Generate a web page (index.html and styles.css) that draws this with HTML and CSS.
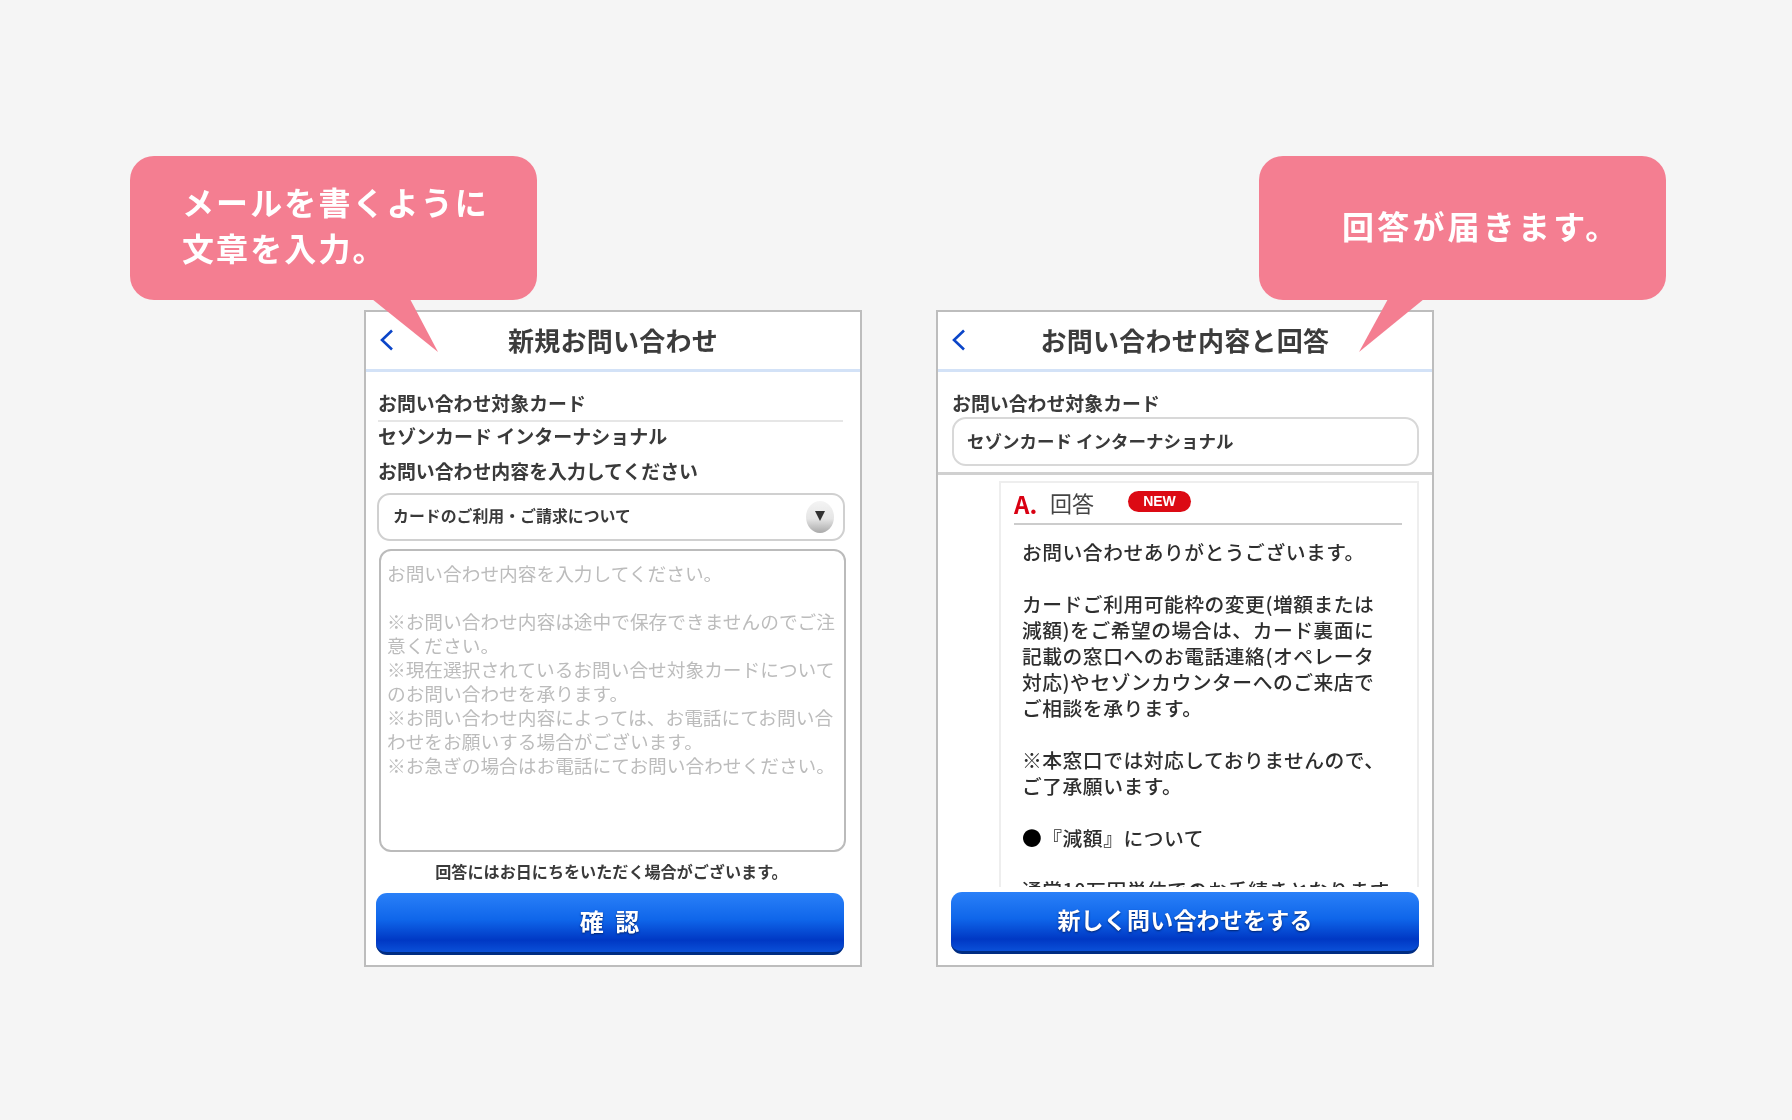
FILE: index.html
```html
<!DOCTYPE html>
<html lang="ja">
<head>
    <meta charset="UTF-8">
    <meta name="viewport" content="width=device-width, initial-scale=1.0">
    <title>お問い合わせ</title>
    <link rel="stylesheet" href="styles.css">
</head>
<body>
    <div class="stage">

        <!-- 新規お問い合わせ -->
        <div class="step">
            <section class="phone">
                <header class="phone-head">
                    <svg class="back" width="15" height="22" viewBox="0 0 15 22"><path d="M13 1.5 3 11l10 9.5" fill="none" stroke="#0b45c8" stroke-width="2.6"/></svg>
                    <h1 class="phone-title">新規お問い合わせ</h1>
                </header>
                <div class="form-body">
                    <p class="label">お問い合わせ対象カード</p>
                    <p class="card-name">セゾンカード インターナショナル</p>
                    <p class="label label-second">お問い合わせ内容を入力してください</p>
                    <div class="select">
                        <span>カードのご利用・ご請求について</span>
                        <span class="knob"><span class="knob-arrow"></span></span>
                    </div>
                    <div class="textarea">
                        お問い合わせ内容を入力してください。<br>
                        <br>
                        ※お問い合わせ内容は途中で保存できませんのでご注<br>
                        意ください。<br>
                        ※現在選択されているお問い合せ対象カードについて<br>
                        のお問い合わせを承ります。<br>
                        ※お問い合わせ内容によっては、お電話にてお問い合<br>
                        わせをお願いする場合がございます。<br>
                        ※お急ぎの場合はお電話にてお問い合わせください。
                    </div>
                    <p class="note">回答にはお日にちをいただく場合がございます。</p>
                    <div class="btn btn-confirm">確 認</div>
                </div>
            </section>
            <div class="bubble bubble-left">
                <p>メールを書くように<br>文章を入力。</p>
            </div>
            <svg class="tail tail-left" width="70" height="54" viewBox="0 0 70 54"><polygon points="0,0 38,0 66,53" fill="#f47e91"/></svg>
        </div>

        <!-- お問い合わせ内容と回答 -->
        <div class="step">
            <section class="phone">
                <header class="phone-head">
                    <svg class="back" width="15" height="22" viewBox="0 0 15 22"><path d="M13 1.5 3 11l10 9.5" fill="none" stroke="#0b45c8" stroke-width="2.6"/></svg>
                    <h1 class="phone-title">お問い合わせ内容と回答</h1>
                </header>
                <div class="target">
                    <p class="label">お問い合わせ対象カード</p>
                    <div class="field">セゾンカード インターナショナル</div>
                </div>
                <div class="answer-area">
                    <div class="answer">
                        <div class="answer-head">
                            <span class="answer-mark">A.</span>
                            <span class="answer-title">回答</span>
                            <span class="badge">NEW</span>
                        </div>
                        <p class="answer-text">
                            お問い合わせありがとうございます。<br>
                            <br>
                            カードご利用可能枠の変更(増額または<br>
                            減額)をご希望の場合は、カード裏面に<br>
                            記載の窓口へのお電話連絡(オペレータ<br>
                            対応)やセゾンカウンターへのご来店で<br>
                            ご相談を承ります。<br>
                            <br>
                            ※本窓口では対応しておりませんので、<br>
                            ご了承願います。<br>
                            <br>
                            <span class="dot">●</span>『減額』について<br>
                            <br>
                            通常10万円単位でのお手続きとなります
                        </p>
                    </div>
                </div>
                <div class="btn btn-new">新しく問い合わせをする</div>
            </section>
            <div class="bubble bubble-right">
                <p>回答が届きます。</p>
            </div>
            <svg class="tail tail-right" width="70" height="54" viewBox="0 0 70 54"><polygon points="30,0 66,0 1,53" fill="#f47e91"/></svg>
        </div>

    </div>
</body>
</html>
```

FILE: styles.css
```css
/* Genel */
body {
    margin: 0;
    background-color: #f5f5f5;
    font-family: "Noto Sans CJK JP", "Noto Sans", sans-serif;
    color: #2e2e2e;
}

p, h1 {
    margin: 0;
}

.stage {
    display: flex;
    gap: 74px;
    height: 810px;
    padding: 310px 0 0 364px;
}

.step {
    position: relative;
    width: 498px;
    height: 657px;
}

/* Telefon */
.phone {
    box-sizing: border-box;
    width: 498px;
    height: 657px;
    background-color: #fff;
    border: 2px solid #bdbdbd;
    overflow: hidden;
    filter: blur(0.6px);
}

.phone-head {
    position: relative;
    display: flex;
    align-items: center;
    justify-content: center;
    box-sizing: border-box;
    height: 60px;
    border-bottom: 3px solid #d3e2f7;
}

.back {
    position: absolute;
    left: 13px;
    top: 17px;
}

.phone-title {
    font-size: 26px;
    font-weight: 700;
    line-height: 1;
    letter-spacing: 0.25px;
    margin-top: -2px;
    color: #3c3c3c;
}

/* Form */
.form-body {
    padding: 19px 0 0 12px;
}

.label {
    padding-bottom: 1px;
    font-size: 18.9px;
    line-height: 23px;
    font-weight: 700;
    color: #3a3a3a;
}

.card-name {
    width: 465px;
    margin-top: 5px;
    padding: 2px 0 1px;
    border-top: 2px solid #e6e6e6;
    font-size: 19px;
    line-height: 24px;
    font-weight: 700;
    color: #3a3a3a;
}

.label-second {
    margin-top: 10px;
}

.select {
    display: flex;
    align-items: center;
    justify-content: space-between;
    box-sizing: border-box;
    width: 468px;
    height: 48px;
    margin: 10px 0 0 -1px;
    padding: 0 9px 3px 14px;
    border: 2px solid #d0d0d0;
    border-radius: 13px;
    font-size: 15.9px;
    font-weight: 700;
    color: #3a3a3a;
}

.knob {
    display: flex;
    align-items: center;
    justify-content: center;
    width: 28px;
    height: 32px;
    margin-top: 3px;
    border-radius: 50%;
    background: linear-gradient(#f4f4f4 0%, #e6e6e6 55%, #a9a9a9 100%);
}

.knob-arrow {
    width: 0;
    height: 0;
    margin-top: -3px;
    border-left: 5px solid transparent;
    border-right: 5px solid transparent;
    border-top: 10px solid #333;
}

.textarea {
    box-sizing: border-box;
    width: 467px;
    height: 303px;
    padding: 10px 0 0 6px;
    margin: 8px 0 0 1px;
    border: 2px solid #bbb;
    border-radius: 12px;
    font-size: 18.7px;
    line-height: 24px;
    white-space: nowrap;
    color: #bcbcbc;
}

.note {
    width: 467px;
    margin-top: 9px;
    padding-bottom: 2px;
    text-align: center;
    font-size: 16.1px;
    line-height: 20px;
    font-weight: 700;
    white-space: nowrap;
    color: #3a3a3a;
}

/* Buton */
.btn {
    display: flex;
    align-items: center;
    justify-content: center;
    box-sizing: border-box;
    width: 468px;
    height: 62px;
    padding-bottom: 5px;
    border-bottom: 3px solid #002c82;
    border-radius: 11px;
    background: linear-gradient(#2a80f8 0%, #0f66ea 45%, #0038c4 80%, #0a50d8 100%);
    color: #fff;
    font-weight: 700;
    text-shadow: 0 1px 2px #00246e;
}

.btn-confirm {
    margin: 10px 0 0 -2px;
    font-size: 24px;
    letter-spacing: 1px;
    word-spacing: 4px;
}

.btn-new {
    margin: 5px 0 0 13px;
    font-size: 23px;
    letter-spacing: 0.2px;
}

/* Cevap ekrani */
.target {
    box-sizing: border-box;
    height: 103px;
    padding: 19px 0 0 14px;
    border-bottom: 3px solid #d0d0d0;
}

.field {
    box-sizing: border-box;
    width: 467px;
    height: 49px;
    margin-top: 2px;
    padding-left: 13px;
    border: 2px solid #d8d8d8;
    border-radius: 14px;
    font-size: 17.5px;
    line-height: 43px;
    font-weight: 700;
    color: #3a3a3a;
}

.answer-area {
    box-sizing: border-box;
    height: 412px;
    padding: 6px 13px 0 61px;
    overflow: hidden;
}

.answer {
    box-sizing: border-box;
    height: 500px;
    padding: 0 15px 0 13px;
    border: 2px solid #eee;
}

.answer-head {
    display: flex;
    align-items: center;
    height: 40px;
    border-bottom: 2px solid #ccc;
}

.answer-mark {
    width: 36px;
    font-size: 24px;
    font-weight: 700;
    color: #d90012;
}

.answer-title {
    margin-top: -2px;
    font-size: 22px;
    color: #444;
}

.badge {
    width: 63px;
    height: 21px;
    margin: -3px 0 0 34px;
    border-radius: 11px;
    background-color: #dc0a14;
    color: #fff;
    font-size: 14px;
    font-weight: 700;
    line-height: 21px;
    text-align: center;
    font-family: "Liberation Sans", sans-serif;
}

.answer-text {
    margin: 14px 0 0 8px;
    font-size: 19.8px;
    line-height: 26px;
    letter-spacing: 0.5px;
    font-weight: 500;
    white-space: nowrap;
    color: #2e2e2e;
}

.dot {
    color: #000;
}

/* Baloncuklar */
.bubble {
    position: absolute;
    top: -154px;
    display: flex;
    align-items: center;
    box-sizing: border-box;
    width: 407px;
    height: 144px;
    padding-bottom: 7px;
    border-radius: 24px;
    background-color: #f47e91;
    color: #fff;
    font-size: 32px;
    font-weight: 700;
    line-height: 46px;
    filter: blur(0.5px);
}

.bubble-left {
    left: -234px;
    padding-bottom: 9px;
    padding-left: 52px;
    letter-spacing: 2.1px;
}

.bubble-right {
    right: -232px;
    padding-left: 83px;
    letter-spacing: 3.2px;
}

.tail {
    position: absolute;
    top: -11px;
}

.tail-left {
    left: 8px;
}

.tail-right {
    left: 422px;
}
```
